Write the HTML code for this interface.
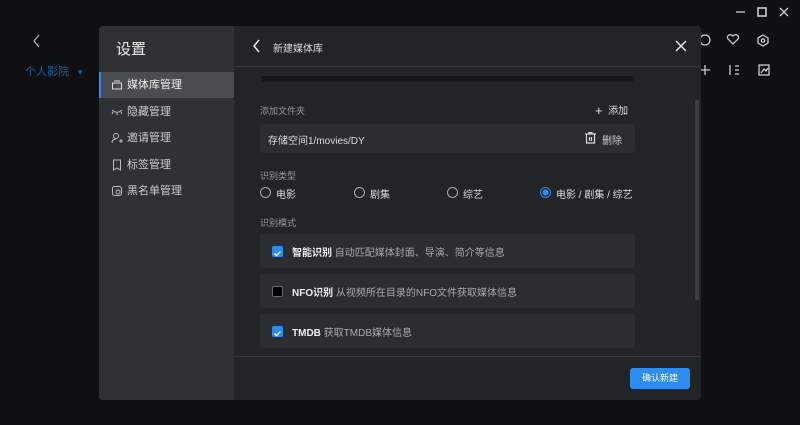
<!DOCTYPE html>
<html><head><meta charset="utf-8"><style>
*{margin:0;padding:0;box-sizing:border-box}
body{width:800px;height:425px;background:#0e1014;font-family:"Liberation Sans","Noto Sans CJK SC",sans-serif;position:relative;overflow:hidden;color:#ddd}
.a{position:absolute}
.dlg{left:99px;top:26px;width:602px;height:374px;background:#222428;border-radius:4px;overflow:hidden}
.side{left:0;top:0;width:135px;height:374px;background:#2e3136}
.si{position:absolute;left:0;width:135px;height:26px;font-size:11px;color:#ccc;line-height:26px;padding-left:28px}
.si svg{position:absolute;left:12px;top:7px}
.lab{font-size:9px;color:#999}
.row{background:#2b2d31;border-radius:3px}
.rad{position:absolute;width:11px;height:11px;border:1px solid #aaa;border-radius:50%}
.t{font-size:10px;color:#ddd;position:absolute}
.cb{position:absolute;left:12px;top:12px;width:11px;height:11px;border-radius:2px;background:#2d8cf0}
</style></head><body>
<svg class="a" style="left:32px;top:34px" width="10" height="14"><path d="M7 1L2 7l5 6" stroke="#aaa" stroke-width="1.3" fill="none"/></svg>
<div class="a" style="left:25px;top:63px;font-size:11px;color:#1f5c9a">个人影院 <span style="font-size:8px;margin-left:4px">▼</span></div>
<svg class="a" style="left:700px;top:0" width="100" height="80" stroke="#ccc" fill="none" stroke-width="1.3">
<path d="M36 12h9"/><rect x="58" y="8" width="8" height="8" stroke-width="1.6"/><path d="M80 8l8 8M88 8l-8 8"/>
<circle cx="5" cy="40" r="5"/><path d="M33 36c-3-3-7 0-5 3l5 5 5-5c2-3-2-6-5-3z"/><path d="M63 35l5 3v5l-5 3-5-3v-5z"/><circle cx="63" cy="40.5" r="1.7"/>
<path d="M5 65v10M0 70h10"/><path d="M30 65v10M35 66h4M35 70h4M35 74h4"/><rect x="59" y="65" width="10" height="10"/><path d="M61 73l3-4 2 2 2-3"/>
</svg>
<div class="a dlg">
 <div class="a side">
  <div class="a" style="left:17px;top:12px;font-size:15px;color:#eee">设置</div>
  <div class="si" style="top:46px;background:#4a4c51;border-left:2px solid #2d8cf0;color:#eee;padding-left:26px"><svg width="12" height="12" style="left:10px" stroke="#ddd" fill="none"><rect x="1.5" y="4" width="9" height="6"/><path d="M3 2h6"/></svg>媒体库管理</div>
  <div class="si" style="top:73px"><svg width="12" height="12" stroke="#bbb" fill="none"><path d="M1 4c3 3 7 3 10 0M2 6l-1 2M6 7v2M10 6l1 2"/></svg>隐藏管理</div>
  <div class="si" style="top:99px"><svg width="12" height="12" stroke="#bbb" fill="none"><circle cx="5" cy="4" r="2.5"/><path d="M1 11c0-3 2-4 4-4M8 9h4M10 7v4"/></svg>邀请管理</div>
  <div class="si" style="top:126px"><svg width="12" height="12" stroke="#bbb" fill="none"><path d="M2.5 1h7v10L6 9l-3.5 2z"/></svg>标签管理</div>
  <div class="si" style="top:152px"><svg width="12" height="12" stroke="#bbb" fill="none"><rect x="1.5" y="1.5" width="9" height="9" rx="2"/><circle cx="7" cy="7" r="2"/></svg>黑名单管理</div>
 </div>
 <svg class="a" style="left:153px;top:13px" width="10" height="14"><path d="M7 1L2 7l5 6" stroke="#eee" stroke-width="1.5" fill="none"/></svg>
 <div class="a" style="left:174px;top:14px;font-size:10px;color:#ddd">新建媒体库</div>
 <svg class="a" style="left:576px;top:14px" width="12" height="12"><path d="M1 1l10 10M11 1L1 11" stroke="#eee" stroke-width="1.4"/></svg>
 <div class="a" style="left:135px;top:40px;width:467px;height:1px;background:#34363b"></div>
 <div class="a" style="left:162px;top:50px;width:373px;height:6px;background:#16181b;border-radius:0 0 3px 3px"></div>
 <div class="a lab" style="left:161px;top:78px">添加文件夹</div>
 <div class="a" style="left:496px;top:76px;font-size:10px;color:#ddd"><span style="font-size:13px;vertical-align:-1px">+</span>&nbsp; 添加</div>
 <div class="a row" style="left:161px;top:98px;width:375px;height:29px"></div>
 <div class="a" style="left:169px;top:106px;font-size:10px;color:#ddd">存储空间1/movies/DY</div>
 <svg class="a" style="left:486px;top:106px" width="11" height="12" stroke="#ddd" fill="none" stroke-width="1.2"><path d="M0 2h11M4 2V0.6h3V2M1.5 2.5v8.5h8V2.5M4.5 5v4M6.5 5v4"/></svg>
 <div class="a" style="left:503px;top:106px;font-size:10px;color:#ccc">删除</div>
 <div class="a lab" style="left:161px;top:143px">识别类型</div>
 <div class="rad" style="left:161px;top:161px"></div><div class="t" style="left:177px;top:160px">电影</div>
 <div class="rad" style="left:255px;top:161px"></div><div class="t" style="left:271px;top:160px">剧集</div>
 <div class="rad" style="left:348px;top:161px"></div><div class="t" style="left:364px;top:160px">综艺</div>
 <div class="rad" style="left:441px;top:161px;border-color:#2d8cf0;background:radial-gradient(#2d8cf0 2.8px,transparent 3.3px)"></div><div class="t" style="left:457px;top:160px">电影 / 剧集 / 综艺</div>
 <div class="a lab" style="left:161px;top:190px">识别模式</div>
 <div class="a row" style="left:161px;top:208px;width:375px;height:34px"><div class="cb"><svg width="11" height="11"><path d="M2.5 5.5l2 2 4-4" stroke="#fff" stroke-width="1.4" fill="none"/></svg></div><div class="t" style="left:32px;top:10px"><b style="color:#eee">智能识别</b> <span style="color:#aaa">自动匹配媒体封面、导演、简介等信息</span></div></div>
 <div class="a row" style="left:161px;top:248px;width:375px;height:34px"><div class="cb" style="background:#000;border:1px solid #666"></div><div class="t" style="left:32px;top:10px"><b style="color:#eee">NFO识别</b> <span style="color:#aaa">从视频所在目录的NFO文件获取媒体信息</span></div></div>
 <div class="a row" style="left:161px;top:288px;width:375px;height:34px"><div class="cb"><svg width="11" height="11"><path d="M2.5 5.5l2 2 4-4" stroke="#fff" stroke-width="1.4" fill="none"/></svg></div><div class="t" style="left:32px;top:10px"><b style="color:#eee">TMDB</b> <span style="color:#aaa">获取TMDB媒体信息</span></div></div>
 <div class="a" style="left:596px;top:74px;width:4px;height:200px;background:#3a3c40;border-radius:2px"></div>
 <div class="a" style="left:135px;top:330px;width:467px;height:1px;background:#37393e"></div>
 <div class="a" style="left:531px;top:342px;width:60px;height:21px;background:#2d8cf0;border-radius:3px;color:#fff;font-size:9px;text-align:center;line-height:21px">确认新建</div>
</div>
</body></html>
